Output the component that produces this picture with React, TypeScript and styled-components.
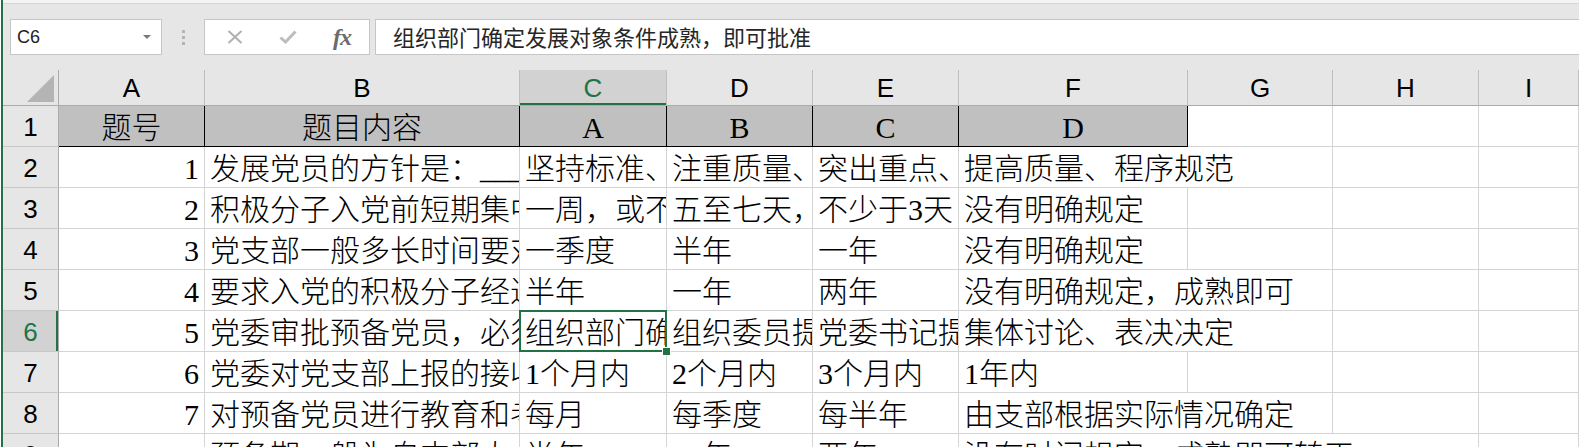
import React from 'react';
import styled, { createGlobalStyle, css } from 'styled-components';

const GREEN = '#217346';
const GRID = '#d4d4d4';

const GlobalStyle = createGlobalStyle`
  html, body {
    margin: 0;
    padding: 0;
    background: #ffffff;
    overflow: hidden;
  }
  * {
    box-sizing: border-box;
  }
`;

const Window = styled.div`
  width: 1578px;
  height: 447px;
  margin-left: 1px;
  border-left: 2px solid ${GREEN};
  display: flex;
  flex-direction: column;
  overflow: hidden;
  background: #e6e6e6;
`;

const TopStrip = styled.div`
  height: 4px;
  flex: none;
  background: #f3f3f3;
  border-bottom: 1px solid #d5d5d5;
`;

const FormulaBar = styled.div`
  flex: none;
  height: 66px;
  display: flex;
  align-items: center;
  padding: 15px 0 15px 7px;
`;

const NameBox = styled.div`
  width: 152px;
  height: 36px;
  flex: none;
  display: flex;
  align-items: center;
  justify-content: space-between;
  padding: 0 10px 0 6px;
  background: #ffffff;
  border: 1px solid #c6c6c6;
  font-family: 'Liberation Sans', Arial, sans-serif;
  font-size: 18px;
  color: #222222;
`;

const DropArrow = styled.span`
  width: 0;
  height: 0;
  border-left: 4px solid transparent;
  border-right: 4px solid transparent;
  border-top: 4px solid #7a7a7a;
`;

const Grip = styled.div`
  flex: none;
  display: flex;
  flex-direction: column;
  gap: 3px;
  margin: 0 19px 0 20px;

  span {
    width: 3px;
    height: 3px;
    background: #b4b4b4;
  }
`;

const FxBox = styled.div`
  width: 166px;
  height: 36px;
  flex: none;
  display: flex;
  align-items: center;
  gap: 36px;
  padding-left: 22px;
  background: #ffffff;
  border: 1px solid #c6c6c6;
`;

const FxLabel = styled.span`
  font-family: 'Liberation Serif', serif;
  font-style: italic;
  font-weight: bold;
  font-size: 24px;
  line-height: 1;
  color: #6b6b6b;
  letter-spacing: -1px;
`;

const FormulaInput = styled.div`
  flex: 1;
  height: 36px;
  margin-left: 5px;
  padding-left: 17px;
  background: #ffffff;
  border: 1px solid #c6c6c6;
  border-right: none;
  font-family: 'Noto Sans CJK SC', sans-serif;
  font-size: 22px;
  line-height: 33px;
  color: #262626;
  white-space: nowrap;
`;

const Sheet = styled.div`
  flex: 1;
  display: grid;
  grid-template-columns: 56px 146px 315px 147px 146px 146px 229px 145px 146px 1fr;
  grid-template-rows: 36px;
  grid-auto-rows: 41px;
  background: #ffffff;
  overflow: hidden;
`;

const Corner = styled.div`
  position: relative;
  background: #e6e6e6;
  border-right: 1px solid #ababab;
  border-bottom: 1px solid #ababab;

  &::after {
    content: '';
    position: absolute;
    right: 4px;
    bottom: 3px;
    width: 27px;
    height: 27px;
    background: #b4b4b4;
    clip-path: polygon(100% 0, 100% 100%, 0 100%);
  }
`;

const headerFont = css`
  font-family: 'Liberation Sans', Arial, sans-serif;
  font-size: 26px;
  text-align: center;
`;

const ColHeader = styled.div<{ $active?: boolean }>`
  ${headerFont};
  line-height: 36px;
  background: ${p => (p.$active ? '#d2d2d2' : '#e6e6e6')};
  color: ${p => (p.$active ? GREEN : '#000000')};
  border-right: 1px solid #bfbfbf;
  border-bottom: 1px solid #ababab;
  box-shadow: ${p => (p.$active ? `inset 0 -2px 0 ${GREEN}` : 'none')};
`;

const RowHeader = styled.div<{ $active?: boolean }>`
  ${headerFont};
  line-height: 42px;
  background: ${p => (p.$active ? '#d2d2d2' : '#e6e6e6')};
  color: ${p => (p.$active ? GREEN : '#000000')};
  border-right: 1px solid #ababab;
  border-bottom: 1px solid #c8c8c8;
  box-shadow: ${p => (p.$active ? `inset -2px 0 0 ${GREEN}` : 'none')};
`;

const Cell = styled.div<{ $span?: number; $title?: boolean; $selected?: boolean }>`
  position: relative;
  min-width: 0;
  grid-column: span ${p => p.$span ?? 1};
  background: ${p => (p.$title ? '#c0c0c0' : '#ffffff')};
  border-right: 1px solid ${p => (p.$title ? '#000000' : GRID)};
  border-bottom: 1px solid ${p => (p.$title ? '#000000' : GRID)};

  ${p =>
    p.$selected &&
    css`
      z-index: 2;
      &::before {
        content: '';
        position: absolute;
        top: -1px;
        left: -1px;
        right: -1px;
        bottom: -1px;
        border: 2px solid ${GREEN};
      }
      &::after {
        content: '';
        position: absolute;
        right: -5px;
        bottom: -5px;
        width: 7px;
        height: 7px;
        background: ${GREEN};
        border: 1px solid #ffffff;
      }
    `}
`;

const CellText = styled.div<{ $align?: 'left' | 'right' | 'center' }>`
  height: 100%;
  overflow: hidden;
  white-space: nowrap;
  padding: 2px 5px 0 5px;
  text-align: ${p => p.$align ?? 'left'};
  font-family: 'Liberation Serif', 'Noto Sans CJK SC', serif;
  font-size: 30px;
  font-weight: 300;
  line-height: 39px;
  color: #000000;
`;

const XIcon = () => (
  <svg width="16" height="14" viewBox="0 0 16 14">
    <path d="M1.5 1 L14.5 13 M14.5 1 L1.5 13" stroke="#b0b0b0" strokeWidth="2" fill="none" />
  </svg>
);

const CheckIcon = () => (
  <svg width="18" height="14" viewBox="0 0 18 14">
    <path d="M1.5 7.5 L6.5 12 L16.5 1.5" stroke="#bdbdbd" strokeWidth="3" fill="none" />
  </svg>
);

type Row = {
  cells: string[];
  spanF?: number;
};

const columns = ['A', 'B', 'C', 'D', 'E', 'F', 'G', 'H', 'I'];

const titles = ['题号', '题目内容', 'A', 'B', 'C', 'D'];

const rows: Row[] = [
  { cells: ['1', '发展党员的方针是：______________', '坚持标准、', '注重质量、', '突出重点、', '提高质量、程序规范'], spanF: 2 },
  { cells: ['2', '积极分子入党前短期集中培训时间', '一周，或不少于40个学时', '五至七天，或不少于32个学时', '不少于3天', '没有明确规定'] },
  { cells: ['3', '党支部一般多长时间要对入党积极分子进行一次考察', '一季度', '半年', '一年', '没有明确规定'] },
  { cells: ['4', '要求入党的积极分子经过多长时间的培养教育', '半年', '一年', '两年', '没有明确规定，成熟即可'], spanF: 2 },
  { cells: ['5', '党委审批预备党员，必须____________', '组织部门确定发展对象条件成熟，即可批准', '组织委员提出意见后即可批准', '党委书记提出意见即可批准', '集体讨论、表决决定'], spanF: 2 },
  { cells: ['6', '党委对党支部上报的接收预备党员的决议，应在多长时间内审批', '1个月内', '2个月内', '3个月内', '1年内'] },
  { cells: ['7', '对预备党员进行教育和考察，多长时间一次', '每月', '每季度', '每半年', '由支部根据实际情况确定'], spanF: 2 },
  { cells: ['8', '预备期一般为自支部大会通过之日起', '半年', '一年', '两年', '没有时间规定，成熟即可转正'], spanF: 3 },
];

const App: React.FC = () => {
  return (
    <>
      <GlobalStyle />
      <Window>
        <TopStrip />
        <FormulaBar>
          <NameBox>
            <span>C6</span>
            <DropArrow />
          </NameBox>
          <Grip>
            <span />
            <span />
            <span />
          </Grip>
          <FxBox>
            <XIcon />
            <CheckIcon />
            <FxLabel>fx</FxLabel>
          </FxBox>
          <FormulaInput>组织部门确定发展对象条件成熟，即可批准</FormulaInput>
        </FormulaBar>

        <Sheet>
          <Corner />
          {columns.map(c => (
            <ColHeader key={c} $active={c === 'C'}>
              {c}
            </ColHeader>
          ))}

          <RowHeader>1</RowHeader>
          {titles.map(t => (
            <Cell key={t} $title>
              <CellText $align="center">{t}</CellText>
            </Cell>
          ))}
          <Cell />
          <Cell />
          <Cell />

          {rows.map((row, i) => {
            const rowNum = i + 2;
            const span = row.spanF ?? 1;
            const rest = 4 - span;
            return (
              <React.Fragment key={rowNum}>
                <RowHeader $active={rowNum === 6}>{rowNum}</RowHeader>
                {row.cells.map((text, j) => (
                  <Cell
                    key={j}
                    $span={j === 5 ? span : 1}
                    $selected={rowNum === 6 && j === 2}
                  >
                    <CellText $align={j === 0 ? 'right' : 'left'}>{text}</CellText>
                  </Cell>
                ))}
                {Array.from({ length: rest }).map((_, k) => (
                  <Cell key={`e${k}`} />
                ))}
              </React.Fragment>
            );
          })}
        </Sheet>
      </Window>
    </>
  );
};

export default App;
